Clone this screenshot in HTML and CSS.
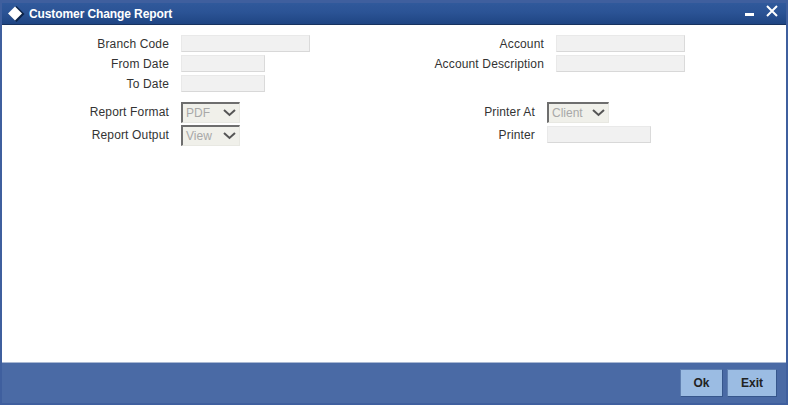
FILE: index.html
```html
<!DOCTYPE html>
<html lang="en">
<head>
<meta charset="utf-8">
<title>Customer Change Report</title>
<link rel="stylesheet" href="styles.css">
</head>
<body>
<div class="window">
  <header class="titlebar">
    <svg class="logo" width="18" height="18" viewBox="0 0 18 18"><path d="M9.5 1l8 8-8 8-8-8z" fill="#0d2448"/><path d="M8 1.5l7 7-7 7-7-7z" fill="#fff"/></svg>
    <h1 class="title">Customer Change Report</h1>
    <div class="controls">
      <svg width="9" height="3" viewBox="0 0 9 3" class="min"><rect width="9" height="3" fill="#fff"/></svg>
      <svg width="12" height="12" viewBox="0 0 12 12" class="close"><path d="M1 1l10 10M11 1L1 11" stroke="#fff" stroke-width="2"/></svg>
    </div>
  </header>
  <main class="content">
    <section class="section section-dates">
      <div class="col col-left">
        <div class="row"><label class="lbl">Branch Code</label><span class="inp w129"></span></div>
        <div class="row"><label class="lbl">From Date</label><span class="inp w84"></span></div>
        <div class="row"><label class="lbl">To Date</label><span class="inp w84"></span></div>
      </div>
      <div class="col col-right">
        <div class="row"><label class="lbl lbl-r1">Account</label><span class="inp w129"></span></div>
        <div class="row"><label class="lbl lbl-r1">Account Description</label><span class="inp w129"></span></div>
      </div>
    </section>
    <section class="section section-output">
      <div class="col col-left">
        <div class="row sel-row"><label class="lbl">Report Format</label><span class="sel"><span>PDF</span><svg width="13" height="8" viewBox="0 0 13 8"><path d="M1 1l5.5 5L12 1" fill="none" stroke="#555" stroke-width="2"/></svg></span></div>
        <div class="row sel-row"><label class="lbl">Report Output</label><span class="sel"><span>View</span><svg width="13" height="8" viewBox="0 0 13 8"><path d="M1 1l5.5 5L12 1" fill="none" stroke="#555" stroke-width="2"/></svg></span></div>
      </div>
      <div class="col col-right">
        <div class="row sel-row"><label class="lbl lbl-r2">Printer At</label><span class="sel sel-client"><span>Client</span><svg width="13" height="8" viewBox="0 0 13 8"><path d="M1 1l5.5 5L12 1" fill="none" stroke="#555" stroke-width="2"/></svg></span></div>
        <div class="row sel-row"><label class="lbl lbl-r2">Printer</label><span class="inp inp-raised w104"></span></div>
      </div>
    </section>
  </main>
  <footer class="footer">
    <button class="btn btn-ok" type="button">Ok</button>
    <button class="btn btn-exit" type="button">Exit</button>
  </footer>
</div>
</body>
</html>
```
FILE: styles.css
```css
* { box-sizing: border-box; }
html, body { margin: 0; padding: 0; }
body { width: 788px; height: 405px; overflow: hidden; font-family: "Liberation Sans", Arial, sans-serif; font-size: 12px; color: #333; }
.window { width: 788px; height: 405px; display: flex; flex-direction: column; background: #4a6aa5; border: 2px solid #3f5f9e; border-top-width: 3px; }
.titlebar { height: 22px; flex: none; display: flex; align-items: center; padding: 0 8px 0 5px; background: linear-gradient(#30599b 0, #2b5395 45%, #1f4583 100%); border-bottom: 1px solid #17325f; }
.logo { flex: none; }
.title { margin: 0 0 0 4px; font-size: 12px; font-weight: bold; color: #fff; letter-spacing: -0.1px; }
.controls { margin-left: auto; display: flex; align-items: flex-start; gap: 12px; height: 100%; }
.min { margin-top: 10px; }
.close { margin-top: 2px; }
.content { flex: 1; display: flex; flex-direction: column; gap: 10px; background: #fff; padding-top: 10px; min-height: 0; }
.section { display: flex; }
.col { display: flex; flex-direction: column; }
.col-left { width: 377px; }
.col-right { flex: 1; }
.section-dates .col { gap: 3px; }
.section-output .col { gap: 2px; }
.row { display: flex; align-items: center; height: 17px; }
.sel-row { height: 21px; }
.lbl { text-align: right; width: 167px; margin-right: 12px; white-space: nowrap; letter-spacing: 0.15px; color: #333; }
.sel-row .lbl { margin-bottom: 2px; }
.lbl-r1 { width: 165px; margin-right: 12px; }
.lbl-r2 { width: 156px; margin-right: 12px; }
.inp { display: block; height: 17px; background: #f1f1f1; border: 1px solid #e9e9e9; border-right-color: #dadada; border-bottom-color: #d8d8d8; }
.inp-raised { margin-bottom: 2px; }
.w129 { width: 129px; }
.w84 { width: 84px; }
.w104 { width: 104px; }
.sel { width: 59px; height: 21px; display: flex; align-items: center; justify-content: space-between; padding: 0 3px; background: #f0f0ea; border: 1px solid #e8e8e2; border-top: 2px solid #6e6e6e; border-left: 2px solid #6e6e6e; color: #a8a8a8; }
.sel-client { width: 62px; }
.footer { height: 41px; flex: none; display: flex; justify-content: flex-end; align-items: flex-start; gap: 4px; padding: 6px 9px 0 0; background: #4a6aa5; border-top: 1px solid #a9b8d3; }
.btn { height: 28px; padding: 0; background: #9bbce3; border: 1px solid #5f7fb0; border-right-color: #36568c; border-bottom-color: #36568c; font: bold 12px "Liberation Sans", Arial, sans-serif; color: #222; }
.btn-ok { width: 43px; }
.btn-exit { width: 50px; }
```
